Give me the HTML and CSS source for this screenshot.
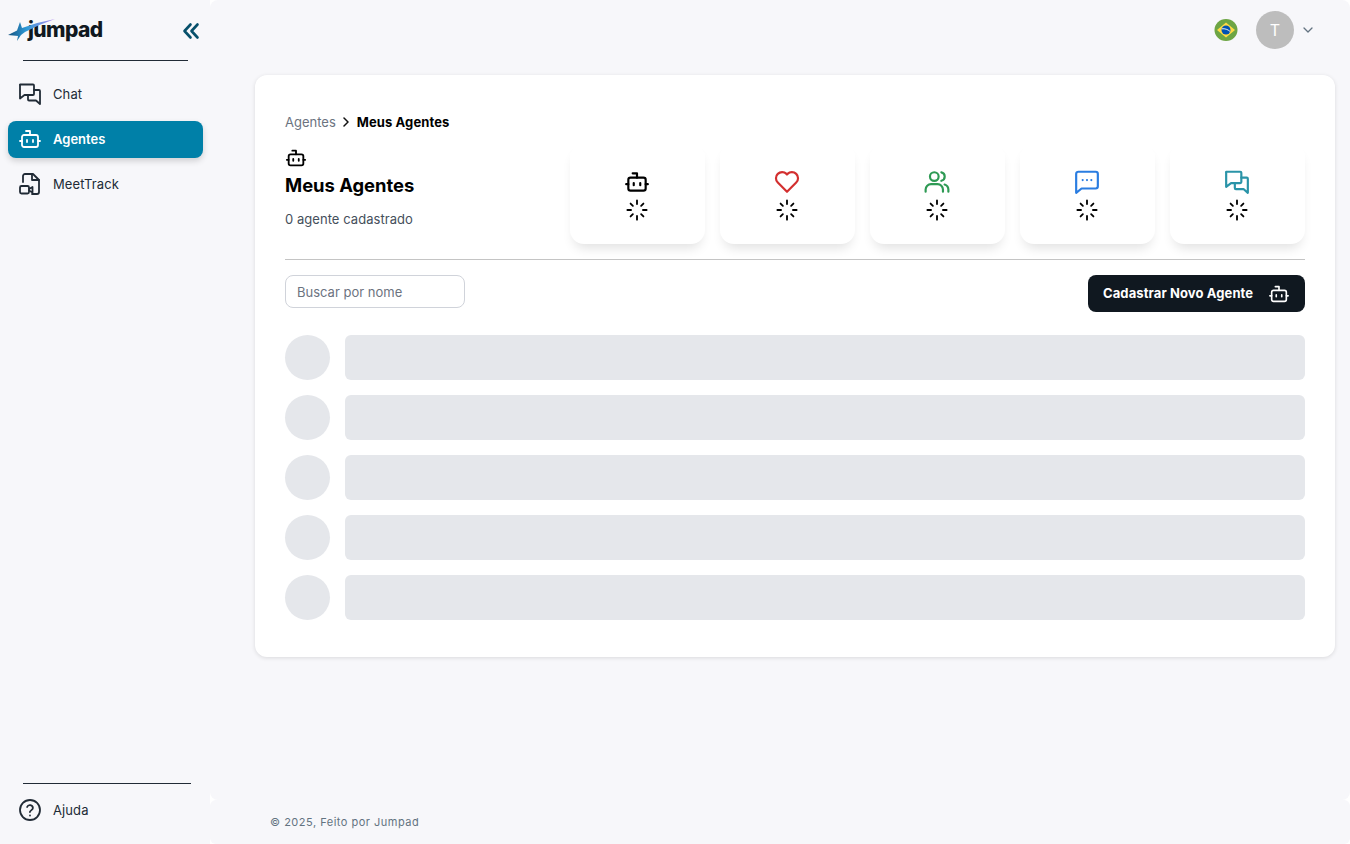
FILE: index.html
```html
<!DOCTYPE html>
<html lang="pt-BR">
<head>
  <meta charset="UTF-8" />
  <meta name="viewport" content="width=device-width, initial-scale=1.0"/>
  <title>Jumpad - Meus Agentes</title>
  <link rel="stylesheet" href="styles.css">
</head>
<body>
  <svg class="sprites" width="0" height="0">
    <defs>
      <symbol id="i-robot" viewBox="0 0 24 24">
        <path d="M12 8V4H8"/>
        <rect x="4" y="8" width="16" height="12" rx="2"/>
        <path d="M2 14h2M20 14h2M9 13v2M15 13v2"/>
      </symbol>
      <symbol id="i-chats" viewBox="0 0 24 24">
        <path d="M2 2.5h13a1 1 0 0 1 1 1V12a1 1 0 0 1-1 1H6.5L2 16.5V3.5a1 1 0 0 1 0-1z"/>
        <path d="M16 8h5a1 1 0 0 1 1 1v13l-4-3.5h-7a1 1 0 0 1-1-1V13"/>
      </symbol>
      <symbol id="i-spin" viewBox="0 0 24 24">
        <path d="M12 1.500v4M12 18.500v4M1.500 12h4M18.500 12h4M5 5l2.500 2.500M16.500 16.500 19 19M5 19l2.500-2.500M16.500 7.500 19 5"/>
      </symbol>
    </defs>
  </svg>

  <aside class="sidebar">
    <div class="brand">
      <div class="logo">
        <span class="logo-text">jumpad</span>
        <svg class="logo-star" width="48" height="30" viewBox="0 0 48 30">
          <defs>
            <linearGradient id="star" x1="0" y1="0" x2="1" y2="0">
              <stop offset="0" stop-color="#12507e"/>
              <stop offset=".4" stop-color="#2f9bd8"/>
              <stop offset="1" stop-color="#b78af0"/>
            </linearGradient>
          </defs>
          <path fill="url(#star)" d="M0 21 9 16.500 12 8 14 14Q30 8 47 5 32 10 17 18L13 21 9 27 10 22z"/>
        </svg>
      </div>
      <svg class="collapse" width="18" height="18" viewBox="0 0 18 18"><path d="M8.500 2.500 2.500 9l6 6.500M15.500 2.500 9.500 9l6 6.500"/></svg>
    </div>
    <hr class="side-line side-line-top">
    <nav class="nav">
      <a class="nav-item"><svg class="ico"><use href="#i-chats"/></svg>Chat</a>
      <a class="nav-item active"><svg class="ico"><use href="#i-robot"/></svg>Agentes</a>
      <a class="nav-item">
        <svg class="ico" viewBox="0 0 24 24"><path d="M5 10V4a2 2 0 0 1 2-2h8l6 6v12a2 2 0 0 1-2 2h-5"/><path d="M14 2v6h7"/><rect x="2" y="14" width="9" height="7.500" rx="1.500"/><path d="m11 17 3.500-2v5.500L11 18.500"/></svg>
        MeetTrack
      </a>
    </nav>
    <div class="side-bottom">
      <hr class="side-line">
      <a class="nav-item help">
        <svg class="ico" viewBox="0 0 24 24"><circle cx="12" cy="12" r="10"/><path d="M9.100 9a3 3 0 0 1 5.800 1c0 2-3 2.600-3 4"/><path d="M12 17.500v.01"/></svg>
        Ajuda
      </a>
    </div>
  </aside>

  <div class="main">
    <div class="content">
      <header class="topbar">
        <svg class="flag" width="24" height="24" viewBox="0 0 24 24">
          <ellipse cx="12" cy="12" rx="11.500" ry="11" fill="#6da544"/>
          <path fill="#ffda44" d="M12 4.500 21 12l-9 7.500L3 12z"/>
          <circle cx="12" cy="12" r="4.500" fill="#0052b4"/>
          <path fill="none" stroke="#f0f0f0" stroke-width="1" d="M7.800 10.800c3-.4 6 .6 8.200 2.600"/>
        </svg>
        <div class="avatar">T</div>
        <svg class="caret" width="10" height="6" viewBox="0 0 10 6"><path d="M1 1l4 4 4-4"/></svg>
      </header>

      <section class="card">
        <div class="crumbs">
          <span class="crumb-link">Agentes</span>
          <svg class="crumb-sep" width="8" height="10" viewBox="0 0 8 10"><path d="M2 1l4 4-4 4"/></svg>
          <strong>Meus Agentes</strong>
        </div>

        <div class="head">
          <div class="title-box">
            <svg class="ico title-ico"><use href="#i-robot"/></svg>
            <h1>Meus Agentes</h1>
            <p>0 agente cadastrado</p>
          </div>
          <div class="stats">
            <div class="stat">
              <svg class="ico stat-ico"><use href="#i-robot"/></svg>
              <svg class="spin"><use href="#i-spin"/></svg>
            </div>
            <div class="stat">
              <svg class="ico stat-ico red" viewBox="0 0 24 24"><path d="M12 21 3.500 12.500a5.600 5.600 0 0 1 0-8 5.600 5.600 0 0 1 8 0l.5.600.5-.600a5.600 5.600 0 0 1 8 0 5.600 5.600 0 0 1 0 8z"/></svg>
              <svg class="spin"><use href="#i-spin"/></svg>
            </div>
            <div class="stat">
              <svg class="ico stat-ico green" viewBox="0 0 24 24"><circle cx="9.500" cy="7" r="4"/><path d="M1.500 21v-2a5 5 0 0 1 5-5h6a5 5 0 0 1 5 5v2M16 3.100a4 4 0 0 1 0 7.800M22.500 21v-2a5 5 0 0 0-3.500-4.700"/></svg>
              <svg class="spin"><use href="#i-spin"/></svg>
            </div>
            <div class="stat">
              <svg class="ico stat-ico blue" viewBox="0 0 24 24"><path d="M4 2.500h16a2 2 0 0 1 2 2V16a2 2 0 0 1-2 2H7l-5 4V4.500a2 2 0 0 1 2-2z"/><path d="M8 10.200v.01M12 10.200v.01M16 10.200v.01"/></svg>
              <svg class="spin"><use href="#i-spin"/></svg>
            </div>
            <div class="stat">
              <svg class="ico stat-ico teal"><use href="#i-chats"/></svg>
              <svg class="spin"><use href="#i-spin"/></svg>
            </div>
          </div>
        </div>

        <hr class="divider">

        <div class="tools">
          <input class="search" type="text" placeholder="Buscar por nome" />
          <button class="btn-new">Cadastrar Novo Agente <svg class="ico"><use href="#i-robot"/></svg></button>
        </div>

        <div class="rows">
          <div class="row"><div class="sk-circle"></div><div class="sk-bar"></div></div>
          <div class="row"><div class="sk-circle"></div><div class="sk-bar"></div></div>
          <div class="row"><div class="sk-circle"></div><div class="sk-bar"></div></div>
          <div class="row"><div class="sk-circle"></div><div class="sk-bar"></div></div>
          <div class="row"><div class="sk-circle"></div><div class="sk-bar"></div></div>
        </div>
      </section>
    </div>

    <footer class="footer">© 2025, Feito por Jumpad</footer>
  </div>
</body>
</html>
```

FILE: styles.css
```css
* { box-sizing: border-box; }
html, body { height: 100%; }
body { margin: 0; height: 844px; overflow: hidden; display: flex; background: #fff; font-family: Inter, "Liberation Sans", sans-serif; color: #000; }
svg { display: block; }
.sprites { position: absolute; }
.ico { width: 24px; height: 24px; fill: none; stroke: currentColor; stroke-width: 2; stroke-linecap: round; stroke-linejoin: round; flex: none; }

/* sidebar */
.sidebar { width: 210px; flex: none; display: flex; flex-direction: column; padding: 0 7px 0 8px; background: #f7f7fa; color: #212b36; }
.brand { height: 60px; display: flex; align-items: center; justify-content: space-between; padding-right: 3px; }
.logo { position: relative; width: 96px; height: 30px; }
.logo-star { position: absolute; left: 0; top: -1px; }
.logo-text { position: absolute; left: 20px; top: 2px; font-size: 21px; line-height: 26px; font-weight: 800; color: #101820; letter-spacing: -.6px; }
.collapse { fill: none; stroke: #07506b; stroke-width: 2.6; stroke-linecap: round; stroke-linejoin: round; margin-top: 1px; }
.side-line { width: 165px; height: 1px; margin: 0 0 0 15px; border: 0; background: #212b36; }
.side-line-top { margin-bottom: 15px; }
.nav { display: flex; flex-direction: column; gap: 8px; }
.nav-item { height: 37px; display: flex; align-items: center; gap: 11px; padding: 0 0 2px 10px; border-radius: 8px; font-size: 13px; letter-spacing: .1px; color: #212b36; }
.nav-item .ico { width: 24px; height: 24px; stroke-width: 1.8; }
.active { background: #0080a8; color: #fff; font-weight: 600; letter-spacing: 0; box-shadow: 0 3px 6px rgba(0,0,0,.16); }
.side-bottom { margin-top: auto; padding-bottom: 15px; }
.side-bottom .side-line { width: 168px; margin-bottom: 8px; }

/* main */
.main { flex: 1; min-width: 0; display: flex; flex-direction: column; }
.content { height: 800px; background: #f7f7fa; border-radius: 8px; padding: 0 15px 0 45px; }
.topbar { height: 75px; display: flex; align-items: center; justify-content: flex-end; padding: 0 22px 15px 0; }
.flag { margin-right: 18px; }
.avatar { width: 38px; height: 38px; border-radius: 50%; background: #bdbdbd; color: #fff; font-size: 16px; display: flex; align-items: center; justify-content: center; margin-right: 9px; }
.caret { fill: none; stroke: #637381; stroke-width: 1.3; stroke-linecap: round; stroke-linejoin: round; }

.card { height: 582px; background: #fff; border-radius: 12px; box-shadow: 0 1px 4px rgba(0,0,0,.12); padding: 39px 30px 0; }
.crumbs { display: flex; align-items: center; height: 15px; font-size: 13px; }
.crumb-link { color: #6c737f; }
.crumb-sep { margin: 0 7px 0 6px; fill: none; stroke: #111; stroke-width: 1.5; stroke-linecap: round; stroke-linejoin: round; }
.crumbs strong { font-weight: 700; letter-spacing: .1px; }

.head { display: flex; justify-content: space-between; height: 116px; margin-top: -1px; }
.title-box { padding-top: 19px; }
.title-ico { width: 22px; height: 22px; }
h1 { margin: 4px 0 0; font-size: 18.4px; line-height: 24px; font-weight: 700; }
.title-box p { margin: 13px 0 0; font-size: 13px; line-height: 18px; letter-spacing: .05px; color: #454f5b; }
.stats { display: flex; gap: 15px; align-items: flex-end; }
.stat { width: 135px; height: 101px; padding: 23px 1px 0 0; background: #fff; border-radius: 14px; box-shadow: 0 8px 12px -4px rgba(0,0,0,.12); display: flex; flex-direction: column; align-items: center; }
.stat-ico { width: 26px; height: 26px; margin-top: 3px; }
.red { color: #d32f2f; }
.green { color: #2e9a54; }
.blue { color: #2a7de1; }
.teal { color: #2a94a8; }
.spin { width: 22px; height: 22px; margin-top: 4px; fill: none; stroke: #000; stroke-width: 2; stroke-linecap: round; }

.divider { height: 1px; margin: 15px 0; border: 0; background: #c4c4c4; }
.tools { display: flex; justify-content: space-between; align-items: flex-start; height: 37px; }
.search { width: 180px; height: 33px; padding: 0 11px; border: 1px solid #d0d3da; border-radius: 8px; font: 13px Inter, "Liberation Sans", sans-serif; outline: 0; }
.search::placeholder { color: #6c737f; opacity: 1; }
.btn-new { width: 217px; height: 37px; padding: 0 15px 2px; display: flex; align-items: center; justify-content: space-between; border: 0; border-radius: 8px; background: #101820; color: #fff; font: 700 13px Inter, "Liberation Sans", sans-serif; letter-spacing: .1px; }
.btn-new .ico { width: 22px; height: 22px; stroke-width: 1.8; margin-top: 2px; }

.rows { margin-top: 23px; display: flex; flex-direction: column; gap: 15px; }
.row { display: flex; gap: 15px; }
.sk-circle { width: 45px; height: 45px; border-radius: 50%; background: #e5e7eb; flex: none; }
.sk-bar { flex: 1; height: 45px; border-radius: 6px; background: #e5e7eb; }

.footer { height: 44px; background: #f7f7fa; border-radius: 6px; padding: 15px 0 0 60px; font-size: 11px; line-height: 14px; letter-spacing: .5px; color: #637381; }
```
